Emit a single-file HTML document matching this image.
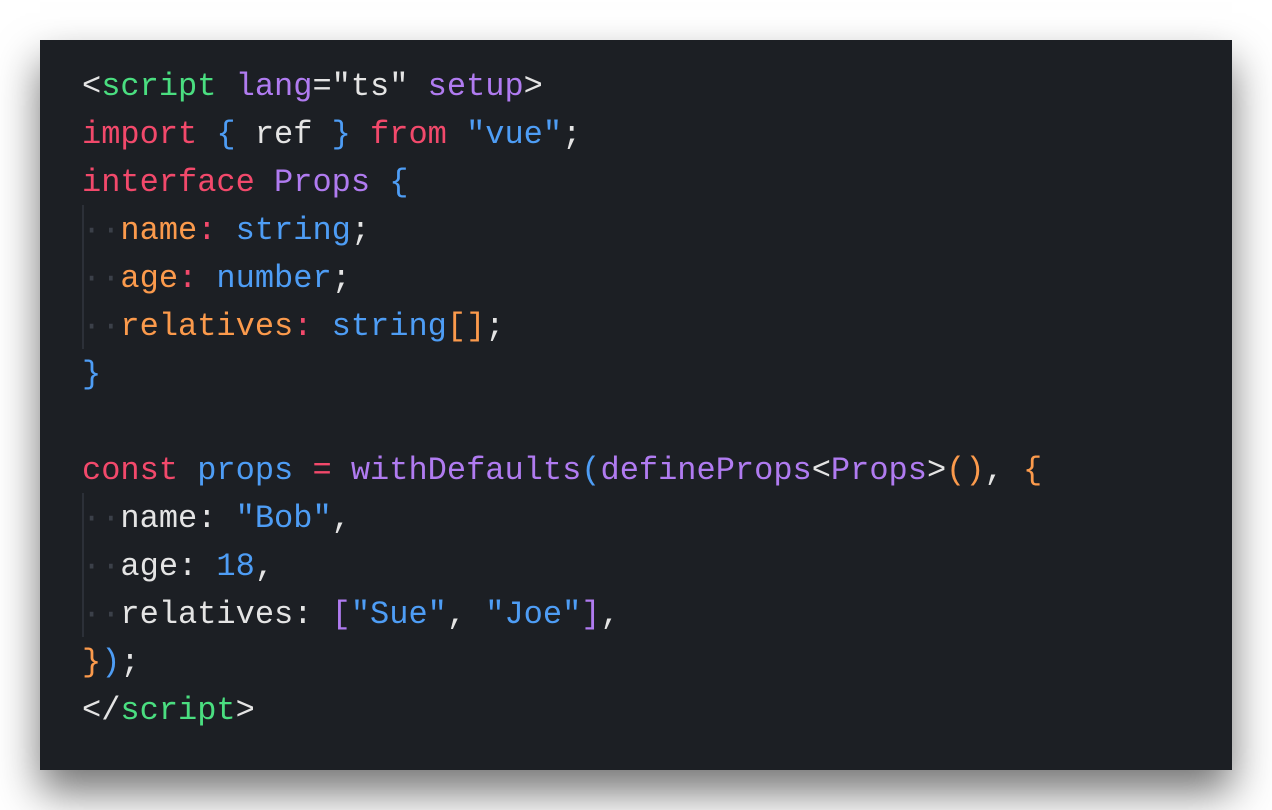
<!DOCTYPE html>
<html><head><style>
body{margin:0;width:1272px;height:810px;background:#fff;overflow:hidden;}
.box{position:absolute;left:40px;top:40px;width:1192px;height:730px;background:#1c1f24;box-shadow:0 22px 40px rgba(0,0,0,.55);}
pre{margin:0;position:absolute;left:42px;top:23px;font-family:"Liberation Mono",monospace;font-size:32px;line-height:48px;color:#e4e4e4;}
.r{color:#f2496b}.g{color:#4ade80}.p{color:#b07bf0}.b{color:#4e9df5}.o{color:#fb9a4c}.w{color:#e4e4e4}.d{color:#3b4049}
.guide{position:absolute;left:42px;width:2px;background:#2c3038;}
</style></head><body>
<div class="box">
<div class="guide" style="top:165px;height:144px"></div>
<div class="guide" style="top:453px;height:144px"></div>
<pre>&lt;<span class="g">script</span> <span class="p">lang</span>=<span class="w">"ts"</span> <span class="p">setup</span>&gt;
<span class="r">import</span> <span class="b">{</span> ref <span class="b">}</span> <span class="r">from</span> <span class="b">"vue"</span>;
<span class="r">interface</span> <span class="p">Props</span> <span class="b">{</span>
<span class="d">··</span><span class="o">name</span><span class="r">:</span> <span class="b">string</span>;
<span class="d">··</span><span class="o">age</span><span class="r">:</span> <span class="b">number</span>;
<span class="d">··</span><span class="o">relatives</span><span class="r">:</span> <span class="b">string</span><span class="o">[]</span>;
<span class="b">}</span>

<span class="r">const</span> <span class="b">props</span> <span class="r">=</span> <span class="p">withDefaults</span><span class="b">(</span><span class="p">defineProps</span>&lt;<span class="p">Props</span>&gt;<span class="o">()</span>, <span class="o">{</span>
<span class="d">··</span>name: <span class="b">"Bob"</span>,
<span class="d">··</span>age: <span class="b">18</span>,
<span class="d">··</span>relatives: <span class="p">[</span><span class="b">"Sue"</span>, <span class="b">"Joe"</span><span class="p">]</span>,
<span class="o">}</span><span class="b">)</span>;
&lt;/<span class="g">script</span>&gt;</pre>
</div>
</body></html>
